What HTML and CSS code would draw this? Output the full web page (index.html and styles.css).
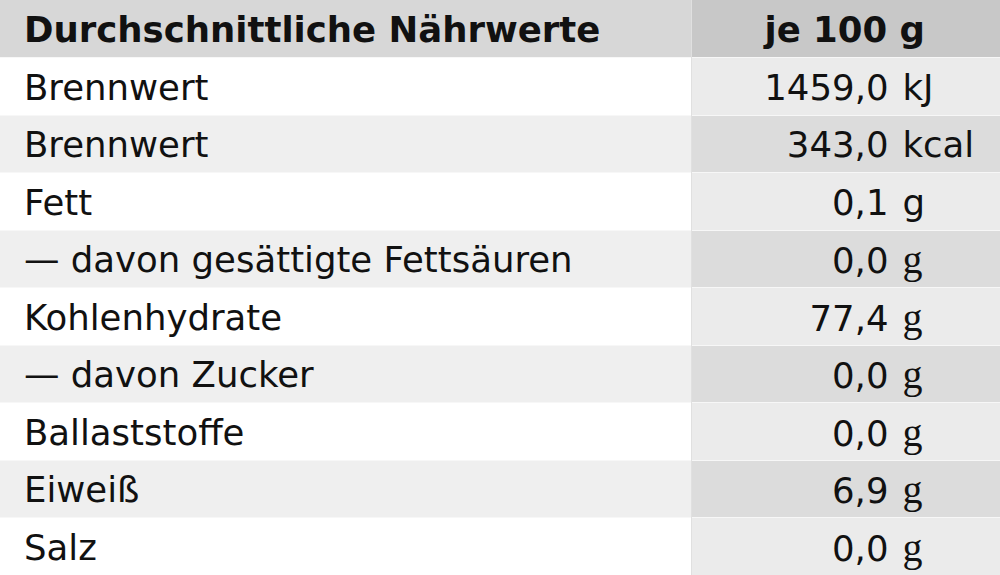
FILE: index.html
```html
<!DOCTYPE html>
<html lang="de">
<head>
<meta charset="utf-8">
<title>Nährwerte</title>
<link rel="stylesheet" href="styles.css">
</head>
<body>
<table class="nutri">
  <thead>
    <tr>
      <th class="label">Durchschnittliche Nährwerte</th>
      <th class="value head">je 100 g</th>
    </tr>
  </thead>
  <tbody>
    <tr><td class="label">Brennwert</td><td class="value"><span class="num">1459,0</span><span class="unit">kJ</span></td></tr>
    <tr><td class="label">Brennwert</td><td class="value"><span class="num">343,0</span><span class="unit">kcal</span></td></tr>
    <tr><td class="label">Fett</td><td class="value"><span class="num">0,1</span><span class="unit">g</span></td></tr>
    <tr><td class="label">— davon gesättigte Fettsäuren</td><td class="value"><span class="num">0,0</span><span class="unit-serif">g</span></td></tr>
    <tr><td class="label">Kohlenhydrate</td><td class="value"><span class="num">77,4</span><span class="unit-serif">g</span></td></tr>
    <tr><td class="label">— davon Zucker</td><td class="value"><span class="num">0,0</span><span class="unit-serif">g</span></td></tr>
    <tr><td class="label">Ballaststoffe</td><td class="value"><span class="num">0,0</span><span class="unit-serif">g</span></td></tr>
    <tr><td class="label">Eiweiß</td><td class="value"><span class="num">6,9</span><span class="unit-serif">g</span></td></tr>
    <tr><td class="label">Salz</td><td class="value"><span class="num">0,0</span><span class="unit-serif">g</span></td></tr>
  </tbody>
</table>
</body>
</html>
```
FILE: styles.css
```css
html, body {
  margin: 0;
  padding: 0;
  background: #ffffff;
}

.unit {
  margin-left: 14px;
}

.unit-serif {
  margin-left: 14px;
  font-family: "Liberation Serif", "DejaVu Serif", serif;
  font-size: 40px;
}

.nutri {
  width: 1000px;
  border-collapse: collapse;
  table-layout: fixed;
  font-family: "DejaVu Sans", "Liberation Sans", sans-serif;
  font-size: 35.5px;
  color: #111111;
}

.nutri th,
.nutri td {
  height: 57.5px;
  padding: 2px 0 0 0;
  vertical-align: middle;
  box-sizing: border-box;
}

.nutri .label {
  width: 691px;
  text-align: left;
  padding-left: 24px;
  border-right: 1px solid #e0e0e0;
}

.nutri th {
  font-weight: 700;
}

.nutri thead .label { background: #d7d7d7; }
.nutri thead .value { background: #c8c8c8; }

.nutri .head {
  text-align: right;
  padding-right: 75px;
}

.nutri tbody tr:nth-child(odd) .label { background: #ffffff; }
.nutri tbody tr:nth-child(odd) .value { background: #ebebeb; }
.nutri tbody tr:nth-child(even) .label { background: #efefef; }
.nutri tbody tr:nth-child(even) .value { background: #dcdcdc; }

.nutri tbody td {
  border-top: 1px solid #f7f7f7;
}

.nutri td.value {
  white-space: nowrap;
}

.num {
  display: inline-block;
  width: 197px;
  text-align: right;
}
```
